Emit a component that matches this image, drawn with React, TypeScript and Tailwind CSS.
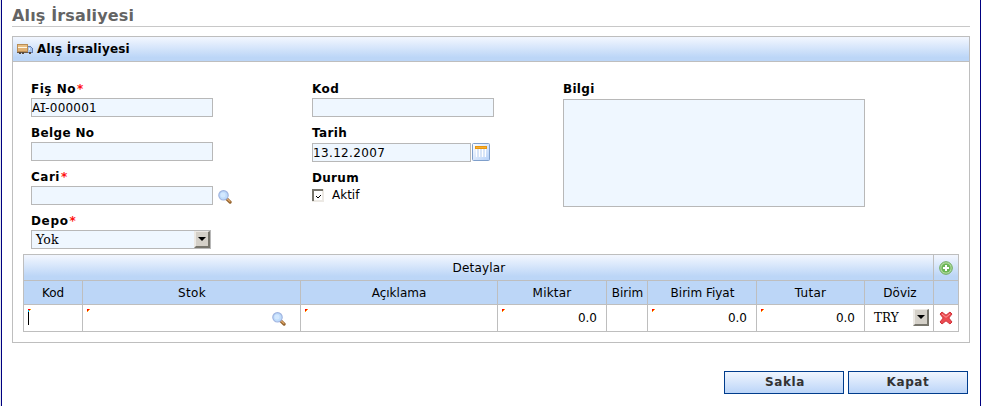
import React from "react";

const sans = "font-['DejaVu_Sans','Liberation_Sans',sans-serif]";
const serif = "font-['DejaVu_Serif','Liberation_Serif',serif]";
const field = "block h-[19px] border border-[#b8b8b8] bg-[#eff7ff] text-[12px] leading-[18px] outline-none rounded-none p-0 text-black";

function Magnifier() {
  return (
    <svg width="14" height="14" viewBox="0 0 14 14" className="block">
      <path d="M9 9.2l3.1 2.9" stroke="#95642f" strokeWidth="3.2" strokeLinecap="round" />
      <path d="M9.5 9.2l2.4 2.2" stroke="#e3ab6c" strokeWidth="1.2" strokeLinecap="round" />
      <circle cx="5.5" cy="5.3" r="4.7" fill="#bfdcfb" stroke="#a0b4e0" strokeWidth="1.2" />
      <circle cx="5" cy="5" r="2.5" fill="#d3e8ff" />
    </svg>
  );
}

function Truck() {
  return (
    <svg width="16" height="10" viewBox="0 0 16 10" className="block" shapeRendering="crispEdges">
      <rect x="0" y="0" width="11" height="8" fill="#b98d55" />
      <rect x="1" y="1" width="9" height="2" fill="#e8bf85" />
      <rect x="1" y="3" width="9" height="1" fill="#fff7e6" />
      <rect x="1" y="4" width="9" height="3" fill="#e0b175" />
      <path d="M11 2h3v1h1v1h1v5h-5z" fill="#6580b5" />
      <path d="M11 3h3v1h1v4h-4z" fill="#a9c6ef" />
      <path d="M12 4h1v2h-1z" fill="#edf5ff" />
      <rect x="0" y="8" width="11" height="1" fill="#6d5a48" />
      <path d="M2 8h2v2H2zM5 8h2v2H5zM12 8h2v2h-2z" fill="#55483d" />
    </svg>
  );
}

function Calendar() {
  return (
    <svg width="18" height="18" viewBox="0 0 18 18" className="block">
      <defs>
        <linearGradient id="cal" x1="0" y1="0" x2="1" y2="1">
          <stop offset="0" stopColor="#fff" />
          <stop offset="1" stopColor="#b4d0f8" />
        </linearGradient>
      </defs>
      <rect x=".5" y=".5" width="17" height="17" rx="1" fill="url(#cal)" stroke="#7f9fcb" />
      <path d="M4 6h10v8H4z" fill="#d8e5f8" />
      <path d="M4.5 6v8M7.5 6v8M10.5 6v8M13.5 6v8" stroke="#fff" />
      <rect x="3" y="3" width="12" height="3" fill="#e9960c" />
      <rect x="4" y="4" width="10" height="1" fill="#f5ae35" />
    </svg>
  );
}

function AddIcon() {
  return (
    <svg width="14" height="14" viewBox="0 0 14 14" className="block">
      <circle cx="7" cy="7" r="6.3" fill="#b0dc9c" stroke="#6aa95c" />
      <circle cx="7" cy="7" r="4.6" fill="#6ab556" />
      <path d="M7 4v6M4 7h6" stroke="#fff" strokeWidth="2" />
    </svg>
  );
}

function DeleteIcon() {
  return (
    <svg width="14" height="14" viewBox="0 0 14 14" className="block">
      <path d="M1 3l2-2 4 3.2L11 1l2 2-3.2 4L13 11l-2 2-4-3.2L3 13l-2-2 3.2-4z" fill="#ec4a50" stroke="#cf3239" strokeLinejoin="round" />
      <path d="M3 3l4 3.3L11 3" stroke="#f99" fill="none" />
    </svg>
  );
}

function DropButton() {
  return (
    <span className="flex h-[17px] w-[16px] items-center justify-center border-t border-l-2 border-r-2 border-b-2 border-t-[#ece9e4] border-l-[#ece9e4] border-r-[#77756c] border-b-[#77756c] bg-[#d4d0c8]">
      <svg width="8" height="4" viewBox="0 0 8 4"><path d="M0 0h8L4 4z" fill="#000" /></svg>
    </span>
  );
}

function Label({ text, required, tracking }: { text: string; required?: boolean; tracking: string }) {
  return (
    <div className="flex h-[18px] items-center text-[12px] leading-[18px] font-bold text-black">
      <span className={tracking}>{text}</span>
      {required && <span className="ml-[1px] text-[#ff1010]">*</span>}
    </div>
  );
}

function Corner() {
  return (
    <svg width="3" height="3" viewBox="0 0 3 3" className="mt-[4px] ml-[4px] block shrink-0" shapeRendering="crispEdges">
      <path d="M0 0h2v1H1v1H0z" fill="#ff0000" />
      <path d="M2 0h1v1H2zM1 1h1v1H1zM0 2h1v1H0z" fill="#ffa000" />
    </svg>
  );
}

const head = "flex items-center justify-center border-l border-[#bebebe]";
const cell = "flex border-l border-[#bebebe]";

function NumberCell() {
  return (
    <div className={cell + " justify-between pr-[9px]"}>
      <Corner />
      <span className="leading-[26px]">0.0</span>
    </div>
  );
}

export default function App() {
  return (
    <div className={"h-[406px] w-[981px] overflow-hidden border-l border-l-[#e4e8ee] bg-white text-black " + sans}>
      <div className="h-full border-x border-[#000080] pr-[10px] pl-[10px]">
        <h1 className="h-[27px] border-b border-[#c8c8c8] pt-[6px] text-[16px] leading-[20px] font-bold tracking-[0.15px] text-[#646464]">Alış İrsaliyesi</h1>
        <section className="mt-[9px] h-[307px] w-[958px] border border-[#bebebe]">
          <header className="flex h-[25px] items-center border-b border-[#bebebe] bg-linear-to-b from-[#f0f5fe] from-5% to-[#bcd6f7] to-85% pl-[4px]">
            <Truck />
            <h2 className="ml-[4px] text-[12px] leading-[24px] font-bold tracking-[0.2px]">Alış İrsaliyesi</h2>
          </header>

          <div className="flex h-[192px] pt-[18px] pl-[18px]">
            <div className="w-[281px]">
              <div className="h-[44px]">
                <Label text="Fiş No" required tracking="tracking-[0.5px]" />
                <div className={field + " w-[182px] tracking-[0.2px]"}>
                  A<span className="-mr-[1.4px] -ml-[1.2px] font-['DejaVu_Sans_Mono',monospace]">I</span>-000001
                </div>
              </div>
              <div className="h-[44px]">
                <Label text="Belge No" tracking="tracking-[0.35px]" />
                <input className={field + " w-[182px]"} />
              </div>
              <div className="h-[44px]">
                <Label text="Cari" required tracking="tracking-[0.5px]" />
                <div className="flex gap-[5px]">
                  <input className={field + " w-[182px]"} />
                  <div className="pt-[4px]"><Magnifier /></div>
                </div>
              </div>
              <Label text="Depo" required tracking="tracking-[0.65px]" />
              <div className={"flex h-[19px] w-[180px] justify-between border border-[#b8b8b8] bg-[#eff7ff] pl-[4px] text-[12.5px] leading-[18px] " + serif}>
                <span className="tracking-[0.1px]">Yok</span>
                <DropButton />
              </div>
            </div>

            <div className="w-[251px]">
              <div className="h-[44px]">
                <Label text="Kod" tracking="tracking-[0.4px]" />
                <input className={field + " w-[182px]"} />
              </div>
              <div className="h-[45px]">
                <Label text="Tarih" tracking="tracking-[0.4px]" />
                <div className="mt-px flex gap-[1px]">
                  <div className={field + " w-[159px] tracking-[0.35px]"}>13.12.2007</div>
                  <Calendar />
                </div>
              </div>
              <Label text="Durum" tracking="tracking-[0.3px]" />
              <label className="flex h-[16px] items-center text-[12px]">
                <svg width="12" height="13" viewBox="0 0 12 13" className="mt-px" shapeRendering="crispEdges">
                  <rect width="12" height="13" fill="#ece9e4" />
                  <rect width="11" height="2" fill="#77756c" />
                  <rect width="2" height="12" fill="#77756c" />
                  <rect x="2" y="2" width="8" height="9" fill="#fff" />
                  <path d="M4 7h1v1H4zM5 8h2v1H5zM7 7h1v1H7zM8 6h1v1H8z" fill="#000" />
                </svg>
                <span className="ml-[8px]">Aktif</span>
              </label>
            </div>

            <div>
              <Label text="Bilgi" tracking="tracking-[0.3px]" />
              <textarea className="mt-px block h-[108px] w-[302px] resize-none border border-[#b8b8b8] bg-[#eff7ff] outline-none" />
            </div>
          </div>

          <div className="ml-[10px] w-[936px] border border-l-0 border-[#bebebe] text-[12px]">
            <div className="grid h-[25px] grid-cols-[910px_25px] bg-linear-to-b from-[#f0f5fe] from-5% to-[#bcd6f7] to-85%">
              <div className={head + " pl-px tracking-[0.2px]"}>Detaylar</div>
              <div className={head}><AddIcon /></div>
            </div>
            <div className="grid h-[25px] grid-cols-[59px_218px_197px_109px_41px_109px_108px_69px_25px] border-y border-[#bebebe] bg-[#bcd6f7]">
              <div className={head}>Kod</div>
              <div className={head + " pl-px tracking-[0.3px]"}>Stok</div>
              <div className={head}>Açıklama</div>
              <div className={head + " tracking-[0.2px]"}>Miktar</div>
              <div className={head + " pl-px"}>Birim</div>
              <div className={head + " pl-px"}>Birim Fiyat</div>
              <div className={head + " tracking-[0.3px]"}>Tutar</div>
              <div className={head + " pl-[2px]"}>Döviz</div>
              <div className={head} />
            </div>
            <div className="grid h-[26px] grid-cols-[59px_218px_197px_109px_41px_109px_108px_69px_25px]">
              <div className={cell}>
                <svg width="3" height="16" viewBox="0 0 3 16" className="mt-[4px] ml-[4px] block" shapeRendering="crispEdges">
                  <path d="M0 0h2v1H0z" fill="#ff0000" />
                  <path d="M2 0h1v1H2zM1 1h1v1H1z" fill="#ffa000" />
                  <path d="M0 1h1v2H0z" fill="#00b8ff" />
                  <path d="M0 3h1v13H0z" fill="#000" />
                </svg>
              </div>
              <div className={cell + " justify-between pr-[14px]"}>
                <Corner />
                <div className="pt-[7px]"><Magnifier /></div>
              </div>
              <div className={cell}><Corner /></div>
              <NumberCell />
              <div className={cell} />
              <NumberCell />
              <NumberCell />
              <div className={cell + " justify-between pr-[4px] pl-[9px]"}>
                <span className={"leading-[26px] " + serif}>TRY</span>
                <div className="pt-[4px]"><DropButton /></div>
              </div>
              <div className={cell + " items-center justify-center"}><DeleteIcon /></div>
            </div>
          </div>
        </section>

        <div className="mt-[28px] mr-[2px] flex justify-end gap-[4px]">
          <button className="h-[23px] w-[120px] border border-[#003c8c] bg-linear-to-b from-[#f0f5fe] to-[#bbd5f8] pl-[2px] text-[12px] leading-[21px] font-bold tracking-[0.6px] text-[#333]">Sakla</button>
          <button className="h-[23px] w-[120px] border border-[#003c8c] bg-linear-to-b from-[#f0f5fe] to-[#bbd5f8] text-[12px] leading-[21px] font-bold tracking-[0.6px] text-[#333]">Kapat</button>
        </div>
      </div>
    </div>
  );
}
